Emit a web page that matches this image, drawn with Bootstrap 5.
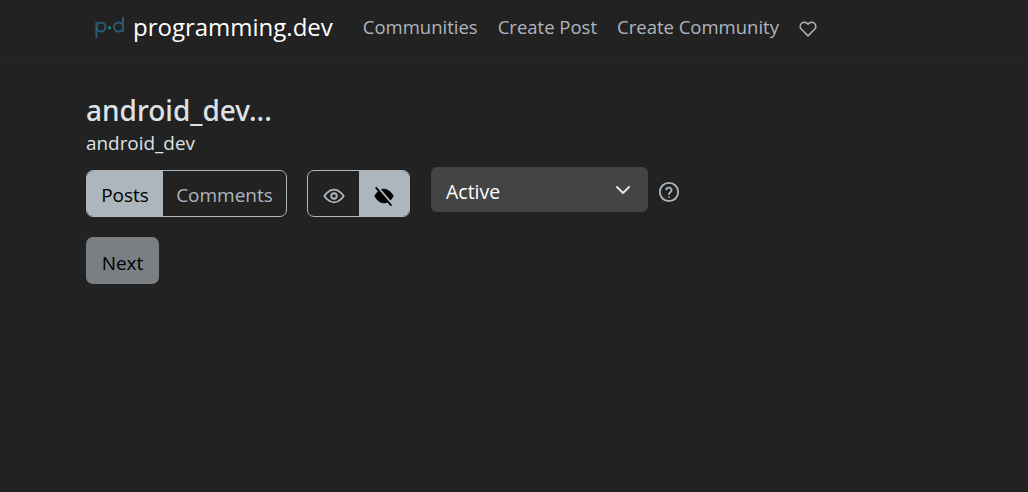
<!DOCTYPE html>
<html lang="en">
<head>
  <meta charset="UTF-8">
  <title>android_dev</title>
  <link href="https://cdn.jsdelivr.net/npm/bootstrap@5.3.2/dist/css/bootstrap.min.css" rel="stylesheet">
  <style>
    body { background: #222; color: #dee2e6; font-family: "Open Sans", "Noto Sans", sans-serif; font-size: 19px; }
    .top-bar { height: 60px; padding: 0 0 6px 94px; border-bottom: 1px solid #262626; }
    .pd-logo { width: 32px; height: 26px; margin-right: 7px; }
    .brand-name { font-size: 24px; color: #fff; margin-right: 20px; }
    .top-link { color: #adb5bd; font-size: 18.500px; text-decoration: none; margin: 0 10px; padding-top: 1px; }
    .heart-icon { margin: 4px 0 0 10px; }
    .page-wrap { padding: 33px 0 0 86px; }
    .page-title { font-family: "Noto Sans", sans-serif; font-size: 28px; font-weight: 500; color: #dee2e6; margin: 0; line-height: 34px; }
    .page-sub { font-size: 18.900px; color: #dee2e6; line-height: 26px; margin: 3px 0 11px; }
    .seg { height: 47px; margin-top: 3px; border: 1px solid #adb5bd; border-radius: 7px; overflow: hidden; }
    .seg-first { margin-right: 20px; }
    .seg-item { display: flex; align-items: center; justify-content: center; color: #adb5bd; font-size: 19px; padding-top: 4px; }
    .seg-item.on { background: #adb5bd; color: #000; }
    .seg-text { width: 76px; }
    .seg-wide { width: 123px; }
    .seg-icon { width: 51px; }
    .seg-icon.on { width: 50px; }
    .sort-select { width: 217px; height: 45px; background: #444; color: #fff; border-radius: 6px; padding: 0 17px 0 15px; margin: 0 10px 0 21px; }
    .sort-label { font-size: 19.500px; padding-top: 5px; }
    .help-icon { margin-top: 14px; }
    .next-btn { width: 73px; height: 47px; background: #7a7f84; color: #000; font-size: 19px; border-radius: 7px; border: 0; padding: 5px 0 0; margin-top: 20px; }
  </style>
</head>
<body>
  <nav class="top-bar d-flex align-items-center">
    <svg class="pd-logo" viewBox="0 0 32 26" fill="none">
      <circle cx="7" cy="13" r="4.500" stroke="#2a5a72" stroke-width="2"/>
      <path d="M2.500 8v16" stroke="#2a5a72" stroke-width="2"/>
      <circle cx="15.500" cy="13.700" r="1.700" fill="#1f7a7a"/>
      <circle cx="24.500" cy="13" r="4.500" stroke="#2a5a72" stroke-width="2"/>
      <path d="M29 3v15" stroke="#2a5a72" stroke-width="2"/>
    </svg>
    <span class="brand-name">programming.dev</span>
    <a class="top-link" href="#">Communities</a>
    <a class="top-link" href="#">Create Post</a>
    <a class="top-link" href="#">Create Community</a>
    <svg class="heart-icon" width="18" height="18" viewBox="0 0 24 24" fill="none" stroke="#adb5bd" stroke-width="2" stroke-linejoin="round">
      <path d="M20.800 4.600a5.500 5.500 0 0 0-7.800 0L12 5.700l-1-1.100a5.500 5.500 0 0 0-7.800 7.800L12 21.200l8.800-8.800a5.500 5.500 0 0 0 0-7.800z"/>
    </svg>
  </nav>
  <main class="page-wrap">
    <h1 class="page-title">android_dev...</h1>
    <div class="page-sub">android_dev</div>
    <div class="d-flex align-items-start">
      <div class="seg seg-first d-flex">
        <div class="seg-item seg-text on">Posts</div>
        <div class="seg-item seg-wide">Comments</div>
      </div>
      <div class="seg d-flex">
        <div class="seg-item seg-icon">
          <svg width="22" height="22" viewBox="0 0 24 24" fill="none" stroke="#adb5bd" stroke-width="2"><path d="M1.500 12S5.500 5 12 5s10.500 7 10.500 7-4 7-10.500 7S1.500 12 1.500 12z"/><circle cx="12" cy="12" r="3"/></svg>
        </div>
        <div class="seg-item seg-icon on">
          <svg width="22" height="22" viewBox="0 0 24 24"><path d="M1.500 12s4-8 10.500-8 10.500 8 10.500 8-4 8-10.500 8S1.500 12 1.500 12z" fill="#000"/><path d="M4.500 2l17 20" stroke="#adb5bd" stroke-width="3"/><path d="M3 2.500l17 20" stroke="#000" stroke-width="2"/></svg>
        </div>
      </div>
      <div class="sort-select d-flex align-items-center justify-content-between">
        <span class="sort-label">Active</span>
        <svg width="16" height="10" viewBox="0 0 16 10" fill="none" stroke="#dee2e6" stroke-width="2" stroke-linecap="round" stroke-linejoin="round"><path d="M2 2l6 6 6-6"/></svg>
      </div>
      <svg class="help-icon" width="22" height="22" viewBox="0 0 24 24" fill="none" stroke="#adb5bd" stroke-width="2" stroke-linecap="round"><circle cx="12" cy="12" r="10"/><path d="M9 9.200a3 3 0 0 1 5.800 1c0 2-2.800 2.500-2.800 4"/><path d="M12 17.500h.01"/></svg>
    </div>
    <button class="next-btn d-block" type="button">Next</button>
  </main>
</body>
</html>
